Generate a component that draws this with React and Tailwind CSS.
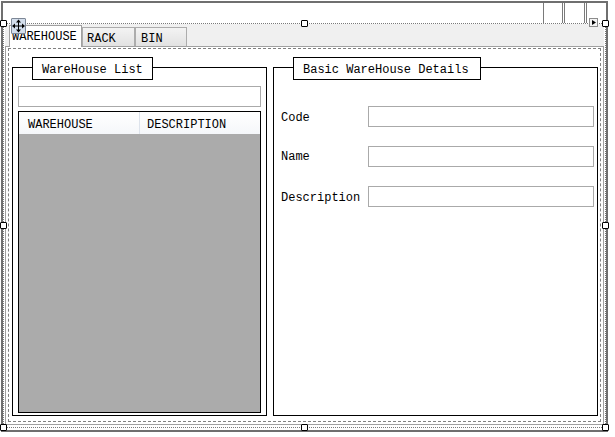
export default function App() {
  return (
    <div className="relative w-[615px] h-[437px] bg-white overflow-hidden text-black font-['Liberation_Mono','Courier_New',monospace] text-[12px] leading-none">
      {/* designer frame */}
      <div className="ml-[1px] mt-[1px] w-[607px] h-[431px] border-2 border-[#6f6f6f] flex flex-col">
        {/* top strip */}
        <div className="relative h-[20px] shrink-0 bg-white">
          <div className="absolute left-[540px] top-0 w-px h-[20px] bg-[#7a7a7a]" />
          <div className="absolute left-[559px] top-0 w-px h-[20px] bg-[#7a7a7a]" />
          <div className="absolute left-[561px] top-0 w-px h-[20px] bg-[#7a7a7a]" />
          <div className="absolute left-[581px] top-0 w-px h-[20px] bg-[#7a7a7a]" />
          <div className="absolute left-[583px] top-0 w-px h-[20px] bg-[#7a7a7a]" />
        </div>
        {/* selection rectangle */}
        <div className="h-[405px] shrink-0 border border-dotted border-[#7a7a7a] bg-white flex flex-col">
          <div className="mx-[1px] h-[401px] flex flex-col">
            {/* tab headers */}
            <div className="h-[22px] shrink-0 bg-[#f0f0f0] flex items-end pl-[4px]">
              <div className="relative z-10 -mb-[1px] h-[22px] w-[73px] shrink-0 bg-white border border-b-0 border-[#a0a0a0] pl-[2px] pt-[1px] flex items-center">
                WAREHOUSE
              </div>
              <div className="h-[19px] w-[53px] shrink-0 border border-b-0 border-[#acacac] bg-linear-to-b from-[#f3f3f3] to-[#e2e2e2] pl-[4px] pt-[3px] flex items-center">
                RACK
              </div>
              <div className="h-[19px] w-[52px] shrink-0 border border-b-0 border-[#acacac] bg-linear-to-b from-[#f3f3f3] to-[#e2e2e2] pl-[5px] pt-[3px] flex items-center">
                BIN
              </div>
            </div>
            {/* tab page */}
            <div className="h-[379px] shrink-0 border border-[#a0a0a0] bg-white pl-[1px] pt-0">
              <div className="ml-[1px] mt-[1px] w-[593px] h-[374px] border border-dashed border-[#808080] flex pl-[3px] pt-[8px] gap-[6px]">
                {/* left group */}
                <div className="w-[255px] h-[359px] shrink-0 flex flex-col">
                  <div className="relative z-10 ml-[20px] w-[121px] h-[23px] shrink-0 border border-black bg-white pl-[9px] pt-[2px] flex items-center">
                    WareHouse List
                  </div>
                  <div className="-mt-[13px] flex-1 border border-black px-[5px] pt-[18px] flex flex-col">
                    <div className="h-[21px] shrink-0 border border-[#aaaaaa] bg-white" />
                    <div className="mt-[4px] h-[302px] shrink-0 border border-black flex flex-col">
                      <div className="h-[22px] shrink-0 flex bg-linear-to-b from-[#ffffff] to-[#f5f7fa]">
                        <div className="w-[121px] shrink-0 border-r border-[#dde3ec] pl-[9px] pt-[3px] flex items-center">
                          WAREHOUSE
                        </div>
                        <div className="pl-[7px] pt-[3px] flex items-center">DESCRIPTION</div>
                      </div>
                      <div className="flex-1 bg-[#ababab]" />
                    </div>
                  </div>
                </div>
                {/* right group */}
                <div className="w-[325px] h-[359px] shrink-0 flex flex-col">
                  <div className="relative z-10 ml-[20px] w-[188px] h-[23px] shrink-0 border border-black bg-white pl-[9px] pt-[2px] flex items-center">
                    Basic WareHouse Details
                  </div>
                  <div className="-mt-[13px] flex-1 border border-black pl-[7px] pt-[38px] flex flex-col gap-[19px]">
                    <div className="h-[21px] flex items-center">
                      <div className="w-[87px] shrink-0 pt-[2px]">Code</div>
                      <div className="w-[226px] h-[21px] shrink-0 border border-[#aaaaaa] bg-white" />
                    </div>
                    <div className="h-[21px] flex items-center">
                      <div className="w-[87px] shrink-0 pt-[1px]">Name</div>
                      <div className="w-[226px] h-[21px] shrink-0 border border-[#aaaaaa] bg-white" />
                    </div>
                    <div className="h-[21px] flex items-center">
                      <div className="w-[87px] shrink-0 pt-[2px]">Description</div>
                      <div className="w-[226px] h-[21px] shrink-0 border border-[#aaaaaa] bg-white" />
                    </div>
                  </div>
                </div>
              </div>
            </div>
          </div>
        </div>
      </div>

      {/* move glyph */}
      <div className="absolute z-20 left-[11px] top-[18px] w-[15px] h-[16px] border border-[#7d8796] bg-[#d3deec] rounded-[1px]">
        <svg width="13" height="14" viewBox="0 0 13 14" className="block">
          <line x1="6.5" y1="2" x2="6.5" y2="12" stroke="#000" strokeWidth="1" />
          <line x1="1.5" y1="7" x2="11.5" y2="7" stroke="#000" strokeWidth="1" />
          <polygon points="6.5,0.5 4,3.5 9,3.5" fill="#000" />
          <polygon points="6.5,13.5 4,10.5 9,10.5" fill="#000" />
          <polygon points="0,7 3,4.5 3,9.5" fill="#000" />
          <polygon points="13,7 10,4.5 10,9.5" fill="#000" />
        </svg>
      </div>

      {/* smart tag arrow */}
      <div className="absolute z-20 left-[589px] top-[18px] w-[9px] h-[9px] border border-[#8c8c8c] bg-[#f4f4f4] flex items-center justify-center">
        <svg width="4" height="5" viewBox="0 0 4 5" className="block">
          <polygon points="0,0 4,2.5 0,5" fill="#000" />
        </svg>
      </div>

      {/* selection handles */}
      <div className="absolute z-20 left-[0px] top-[20px] w-[7px] h-[7px] bg-white border border-black rounded-[1px]" />
      <div className="absolute z-20 left-[301px] top-[20px] w-[7px] h-[7px] bg-white border border-black rounded-[1px]" />
      <div className="absolute z-20 left-[602px] top-[20px] w-[7px] h-[7px] bg-white border border-black rounded-[1px]" />
      <div className="absolute z-20 left-[0px] top-[222px] w-[7px] h-[7px] bg-white border border-black rounded-[1px]" />
      <div className="absolute z-20 left-[602px] top-[222px] w-[7px] h-[7px] bg-white border border-black rounded-[1px]" />
      <div className="absolute z-20 left-[0px] top-[424px] w-[7px] h-[7px] bg-white border border-black rounded-[1px]" />
      <div className="absolute z-20 left-[301px] top-[424px] w-[7px] h-[7px] bg-white border border-black rounded-[1px]" />
      <div className="absolute z-20 left-[602px] top-[424px] w-[7px] h-[7px] bg-white border border-black rounded-[1px]" />
    </div>
  );
}
